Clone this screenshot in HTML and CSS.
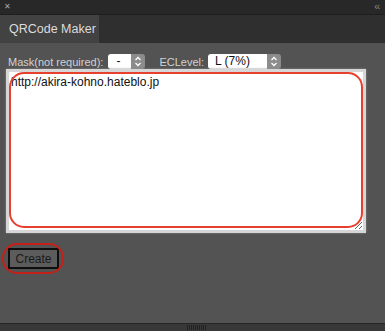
FILE: index.html
```html
<!DOCTYPE html>
<html lang="en">
<head>
    <meta charset="UTF-8">
    <title>QRCode Maker</title>
    <link rel="stylesheet" href="styles.css">
</head>
<body>
    <div class="panel">
        <div class="titlebar">
            <span class="close">&#x2715;</span>
            <span class="collapse">&lsaquo;&lsaquo;</span>
        </div>
        <div class="tabbar">
            <div class="tab">QRCode Maker</div>
        </div>

        <main class="content">
            <div class="options">
                <label class="label">Mask(not required):</label>
                <div class="select select-mask">
                    <span class="value">-</span>
                    <span class="arrow">
                        <svg width="8" height="11" viewBox="0 0 8 11"><path d="M1.5 4 L4 1.5 L6.5 4 M1.5 7 L4 9.5 L6.5 7" fill="none" stroke="#fff" stroke-width="1.3"/></svg>
                    </span>
                </div>
                <label class="label label-ec">ECLevel:</label>
                <div class="select select-ec">
                    <span class="value">L (7%)</span>
                    <span class="arrow">
                        <svg width="8" height="11" viewBox="0 0 8 11"><path d="M1.5 4 L4 1.5 L6.5 4 M1.5 7 L4 9.5 L6.5 7" fill="none" stroke="#fff" stroke-width="1.3"/></svg>
                    </span>
                </div>
            </div>

            <div class="text-wrap">
                <textarea class="url-input">http://akira-kohno.hateblo.jp</textarea>
                <div class="mark mark-text"></div>
            </div>

            <div class="button-wrap">
                <button class="create">Create</button>
                <div class="mark mark-button"></div>
            </div>
        </main>

        <footer class="footer">
            <span class="grip"></span>
        </footer>
    </div>
</body>
</html>
```

FILE: styles.css
```css
html, body {
    margin: 0;
    padding: 0;
    background: #fff;
}
body {
    font-family: "Liberation Sans", Arial, sans-serif;
    font-size: 12px;
    width: 385px;
    height: 334px;
    overflow: hidden;
}
.panel {
    display: flex;
    flex-direction: column;
    height: 331px;
}
.titlebar {
    height: 14px;
    background: #282828;
    border-bottom: 1px solid #1e1e1e;
    display: flex;
    justify-content: space-between;
    align-items: center;
    color: #a8a8a8;
    padding: 0 6px 0 4px;
}
.close {
    font-size: 8px;
    line-height: 8px;
}
.collapse {
    font-size: 10px;
    line-height: 10px;
    letter-spacing: -1px;
    color: #8a8a8a;
}
.tabbar {
    height: 28px;
    background: #2f2f2f;
    display: flex;
}
.tab {
    width: 90px;
    padding-left: 9px;
    background: #424242;
    color: #dcdcdc;
    font-size: 12.5px;
    line-height: 29px;
    white-space: nowrap;
    overflow: hidden;
}
.content {
    flex: 1;
    background: #535353;
    padding: 11px 8px 0 8px;
}
.options {
    display: flex;
    align-items: center;
    height: 15px;
}
.label {
    color: #d2d2d2;
    font-size: 11px;
    white-space: nowrap;
}
.label-ec {
    margin-left: 14px;
    margin-right: 4px;
}
.select {
    display: flex;
    height: 15px;
    border-radius: 3px;
    overflow: hidden;
    margin-left: 5px;
}
.label-ec + .select {
    margin-left: 0;
}
.select .value {
    flex: 1;
    background: #fff;
    color: #111;
    font-size: 12px;
    line-height: 15px;
    padding-left: 8px;
    white-space: nowrap;
}
.select .arrow {
    width: 14px;
    background: #8c8c8c;
    display: flex;
    align-items: center;
    justify-content: center;
}
.select-mask {
    width: 37px;
}
.select-ec {
    width: 73px;
}
.select-ec .value {
    padding-left: 7px;
}
.text-wrap {
    position: relative;
    margin: 0 -2px;
    width: 360px;
    height: 164px;
}
.url-input {
    box-sizing: border-box;
    width: 360px;
    height: 164px;
    margin: 0;
    border: 3px solid #d6d6d6;
    box-shadow: 0 0 2px #8a8a8a;
    background: #fff;
    font-family: "Liberation Sans", Arial, sans-serif;
    font-size: 12px;
    color: #111;
    padding: 3px 2px 1px 2px;
    resize: both;
    outline: none;
}
.mark {
    position: absolute;
    border: 2px solid #e8402e;
    pointer-events: none;
}
.mark-text {
    left: 3px;
    top: 3px;
    right: 3px;
    bottom: 5px;
    border-radius: 15px;
}
.button-wrap {
    position: relative;
    margin-top: 10px;
    width: 62px;
    height: 31px;
    margin-left: -6px;
}
.create {
    position: relative;
    top: 5px;
    left: 6px;
    width: 51px;
    height: 21px;
    padding: 0;
    background: #5c5c5c;
    border: 2px solid #0e0e0e;
    color: #1a1a1a;
    font-family: "Liberation Sans", Arial, sans-serif;
    font-size: 12px;
}
.mark-button {
    left: 0;
    top: 0;
    width: 58px;
    height: 27px;
    border-color: #c42019;
    border-radius: 15px;
}
.footer {
    height: 7px;
    background: #383838;
    border-top: 1px solid #262626;
    display: flex;
    justify-content: center;
    align-items: center;
}
.grip {
    width: 19px;
    height: 5px;
    margin-left: 7px;
    background: repeating-linear-gradient(90deg, #222 0 1px, transparent 1px 2px);
}
```
